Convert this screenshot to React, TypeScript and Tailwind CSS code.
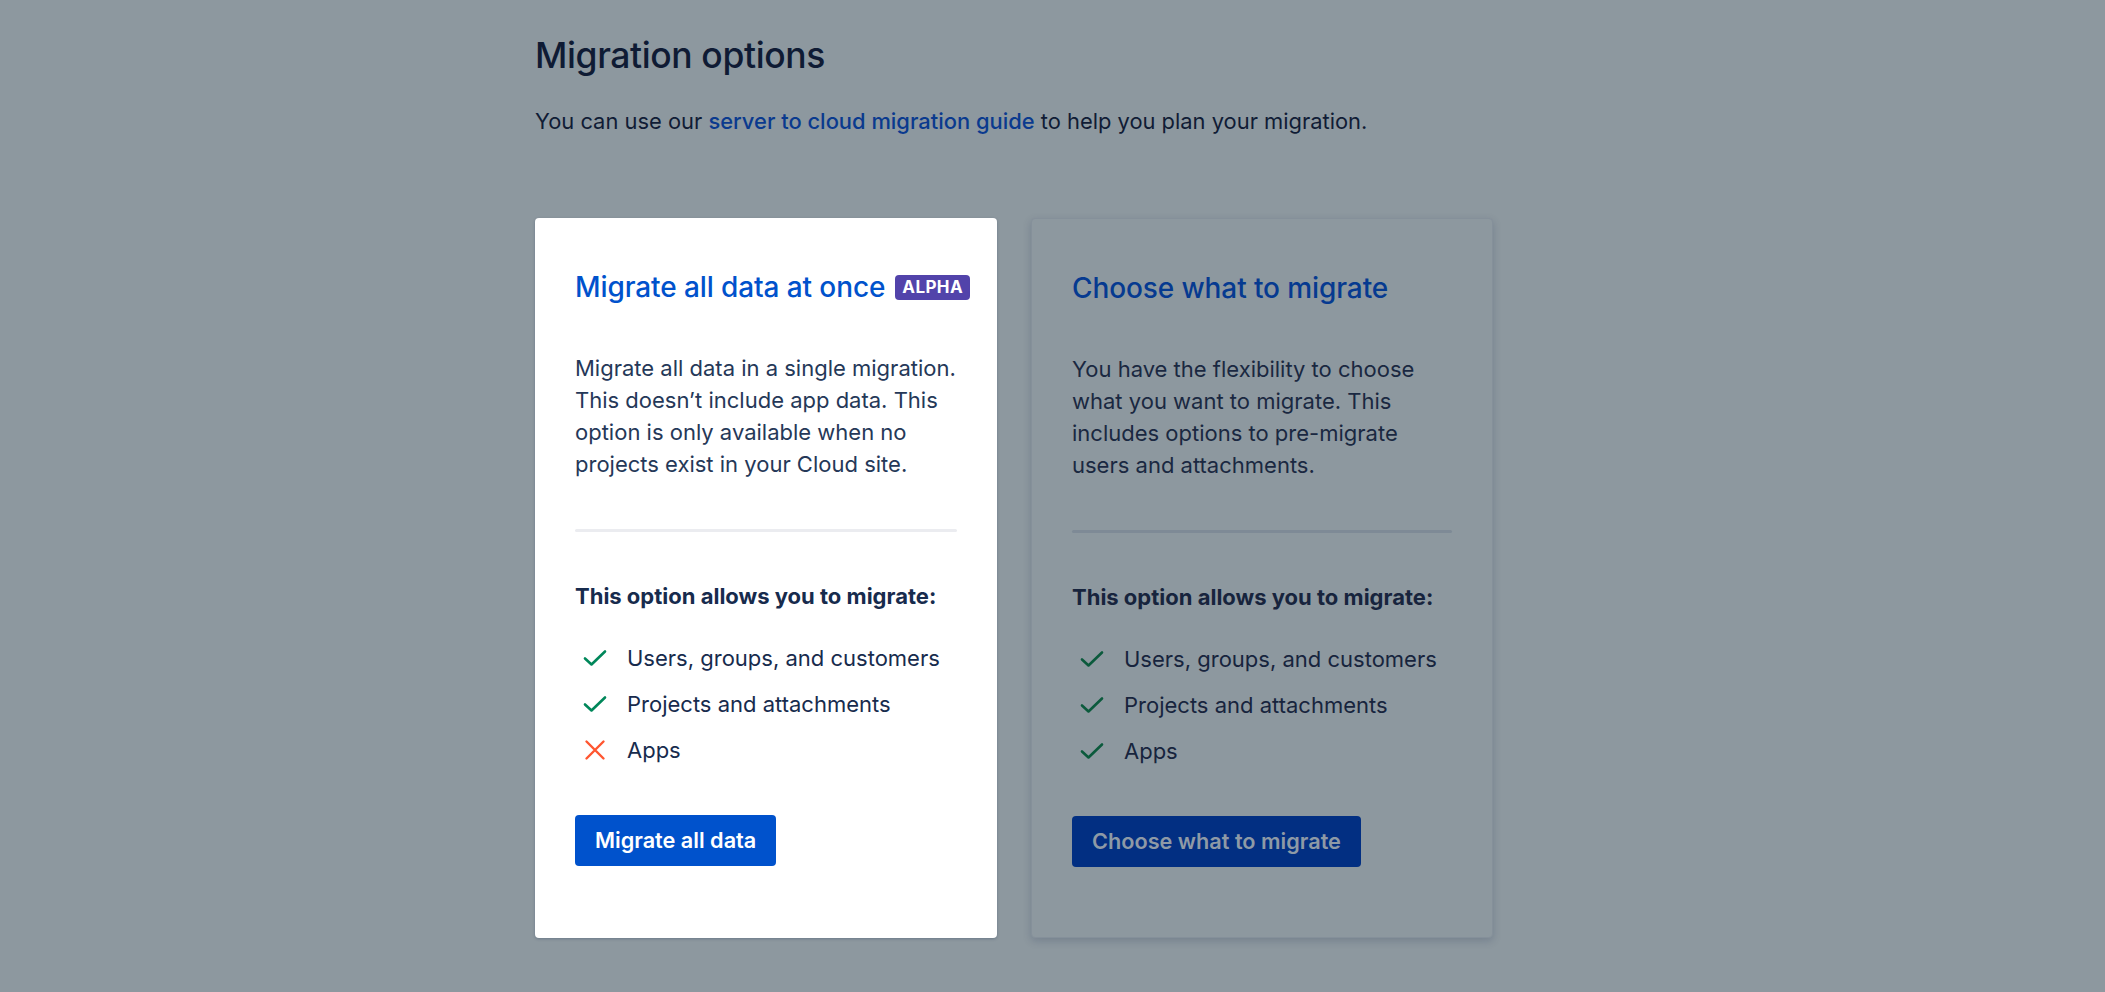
import React from 'react';

type Item = { label: string; ok: boolean };

const Check = ({ color }: { color: string }) => (
  <svg width="24" height="24" viewBox="0 0 24 24" fill="none" className="shrink-0">
    <path d="M2 12.5 L8.5 18.5 L22 5.5" stroke={color} strokeWidth="2.6" strokeLinecap="round" strokeLinejoin="round" />
  </svg>
);

const Cross = () => (
  <svg width="24" height="24" viewBox="0 0 24 24" fill="none" className="shrink-0">
    <path d="M3.5 3.5 L20.5 20.5 M20.5 3.5 L3.5 20.5" stroke="#FF5630" strokeWidth="2.4" strokeLinecap="round" />
  </svg>
);

function OptionCard({
  active,
  title,
  badge,
  description,
  items,
  button,
}: {
  active: boolean;
  title: string;
  badge?: string;
  description: string;
  items: Item[];
  button: string;
}) {
  const text = active ? 'text-[#172b4d]' : 'text-[#17243d]';
  return (
    <div
      className={
        'w-[462px] h-[720px] shrink-0 rounded-[4px] px-[40px] pt-[53px] ' +
        (active
          ? 'bg-white shadow-[0_1px_3px_rgba(9,30,66,0.25)]'
          : 'bg-[#8d989f] border border-[#85909a] shadow-[0_3px_8px_rgba(9,30,66,0.18)]')
      }
    >
      <div className="flex items-center gap-[10px] h-[32px] whitespace-nowrap">
        <h2
          className={
            'text-[28px] leading-[32px] font-medium tracking-[-0.1px] ' +
            (active ? 'text-[#0052cc]' : 'text-[#063a90]')
          }
        >
          {title}
        </h2>
        {badge && (
          <span className="bg-[#5243aa] text-white text-[17px] font-bold leading-[25px] h-[25px] px-[7px] rounded-[4px] tracking-[0.4px]">
            {badge}
          </span>
        )}
      </div>
      <p className={'mt-[49px] text-[22px] leading-[32px] ' + (active ? 'text-[#253858]' : 'text-[#1a2841]')}>
        {description}
      </p>
      <div className={'mt-[49px] h-[3px] rounded ' + (active ? 'bg-[#ebecf0]' : 'bg-[#7e8a96]')} />
      <p className={'mt-[50px] text-[22px] leading-[28px] font-bold ' + text}>
        This option allows you to migrate:
      </p>
      <ul className="mt-[34px] flex flex-col gap-[18px]">
        {items.map((it) => (
          <li key={it.label} className={'flex items-center gap-[20px] pl-[8px] text-[22px] leading-[28px] ' + text}>
            {it.ok ? <Check color={active ? '#00875a' : '#0b5a3c'} /> : <Cross />}
            <span>{it.label}</span>
          </li>
        ))}
      </ul>
      <button
        className={
          'mt-[51px] h-[51px] px-[20px] rounded-[4px] text-[21.7px] font-semibold ' +
          (active ? 'bg-[#0052cc] text-white' : 'bg-[#022f82] text-[#8e9aa6]')
        }
      >
        {button}
      </button>
    </div>
  );
}

export default function App() {
  return (
    <div
      className="min-h-[992px] w-full bg-[#8d989f]"
      style={{ fontFamily: 'Inter, "Noto Sans", sans-serif' }}
    >
      <div className="ml-[535px] w-[960px] pt-[36px]">
        <h1 className="text-[35.5px] leading-[40px] font-medium text-[#0f1b34] tracking-[-0.4px]">
          Migration options
        </h1>
        <p className="mt-[31px] text-[21.9px] leading-[28px] text-[#101c35]">
          You can use our <span className="text-[#0a3a8e] font-medium">server to cloud migration guide</span> to help
          you plan your migration.
        </p>
        <div className="mt-[83px] flex gap-[34px] items-start">
          <OptionCard
            active
            title="Migrate all data at once"
            badge="ALPHA"
            description="Migrate all data in a single migration. This doesn’t include app data. This option is only available when no projects exist in your Cloud site."
            items={[
              { label: 'Users, groups, and customers', ok: true },
              { label: 'Projects and attachments', ok: true },
              { label: 'Apps', ok: false },
            ]}
            button="Migrate all data"
          />
          <OptionCard
            active={false}
            title="Choose what to migrate"
            description="You have the flexibility to choose what you want to migrate. This includes options to pre-migrate users and attachments."
            items={[
              { label: 'Users, groups, and customers', ok: true },
              { label: 'Projects and attachments', ok: true },
              { label: 'Apps', ok: true },
            ]}
            button="Choose what to migrate"
          />
        </div>
      </div>
    </div>
  );
}
